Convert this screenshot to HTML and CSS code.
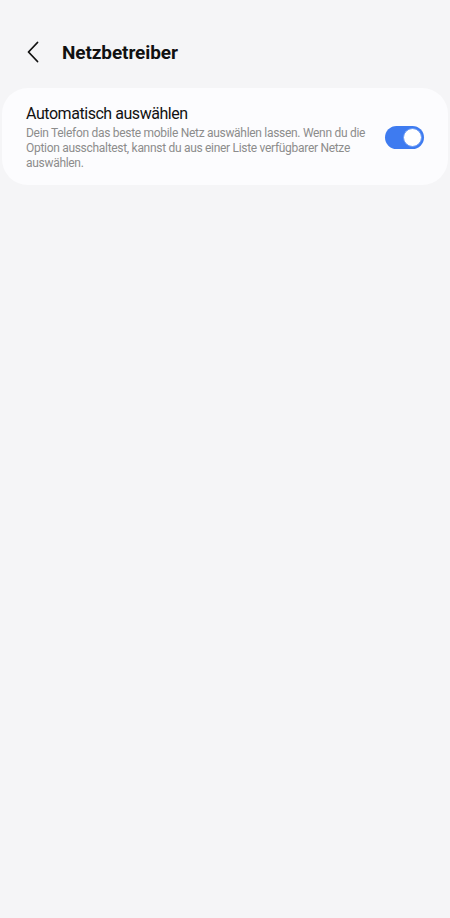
FILE: index.html
```html
<!DOCTYPE html>
<html lang="de">
<head>
<meta charset="utf-8">
<title>Netzbetreiber</title>
<link rel="stylesheet" href="styles.css">
</head>
<body>
  <header class="appbar">
    <button class="back" aria-label="Zurück">
      <svg width="14" height="22" viewBox="0 0 14 22"><path d="M11.5 1.5 L2.5 11 L11.5 20.5" fill="none" stroke="#111" stroke-width="1.8" stroke-linecap="round" stroke-linejoin="round"/></svg>
    </button>
    <h1 class="title">Netzbetreiber</h1>
  </header>

  <section class="card">
    <div class="row">
      <div class="texts">
        <div class="row-title">Automatisch auswählen</div>
        <div class="row-sub">Dein Telefon das beste mobile Netz auswählen lassen. Wenn du die Option ausschaltest, kannst du aus einer Liste verfügbarer Netze auswählen.</div>
      </div>
      <div class="switch on" role="switch" aria-checked="true"><span class="knob"></span></div>
    </div>
  </section>
</body>
</html>
```

FILE: styles.css
```css
html, body {
  margin: 0;
  padding: 0;
}
body {
  width: 450px;
  height: 918px;
  background: #f5f5f7;
  font-family: Roboto, "Noto Sans", sans-serif;
  color: #111;
}
.appbar {
  display: flex;
  align-items: center;
  height: 50px;
  padding: 27px 0 0 26px;
}
.back {
  border: 0;
  background: none;
  padding: 0;
  width: 14px;
  height: 22px;
  display: flex;
}
.title {
  margin: 0 0 0 22px;
  font-size: 19px;
  font-weight: 700;
  letter-spacing: -0.1px;
}
.card {
  margin: 11px 2px 0 2px;
  background: #fcfcfe;
  border-radius: 26px;
  padding: 16px 24px 14px 24px;
}
.row {
  display: flex;
  align-items: center;
  gap: 14px;
}
.texts {
  flex: 1;
}
.row-title {
  font-size: 16px;
  line-height: 20px;
  letter-spacing: -0.45px;
  color: #111;
}
.row-sub {
  margin-top: 2px;
  font-size: 12px;
  line-height: 15px;
  letter-spacing: -0.3px;
  color: #8c8c8c;
}
.switch {
  width: 39px;
  height: 23px;
  border-radius: 12px;
  background: #3e7bf0;
  position: relative;
  flex: none;
}
.knob {
  position: absolute;
  right: 2px;
  top: 2px;
  width: 19px;
  height: 19px;
  box-sizing: border-box;
  border-radius: 50%;
  background: #fff;
  border: 1px solid #6a9af4;
}
```
